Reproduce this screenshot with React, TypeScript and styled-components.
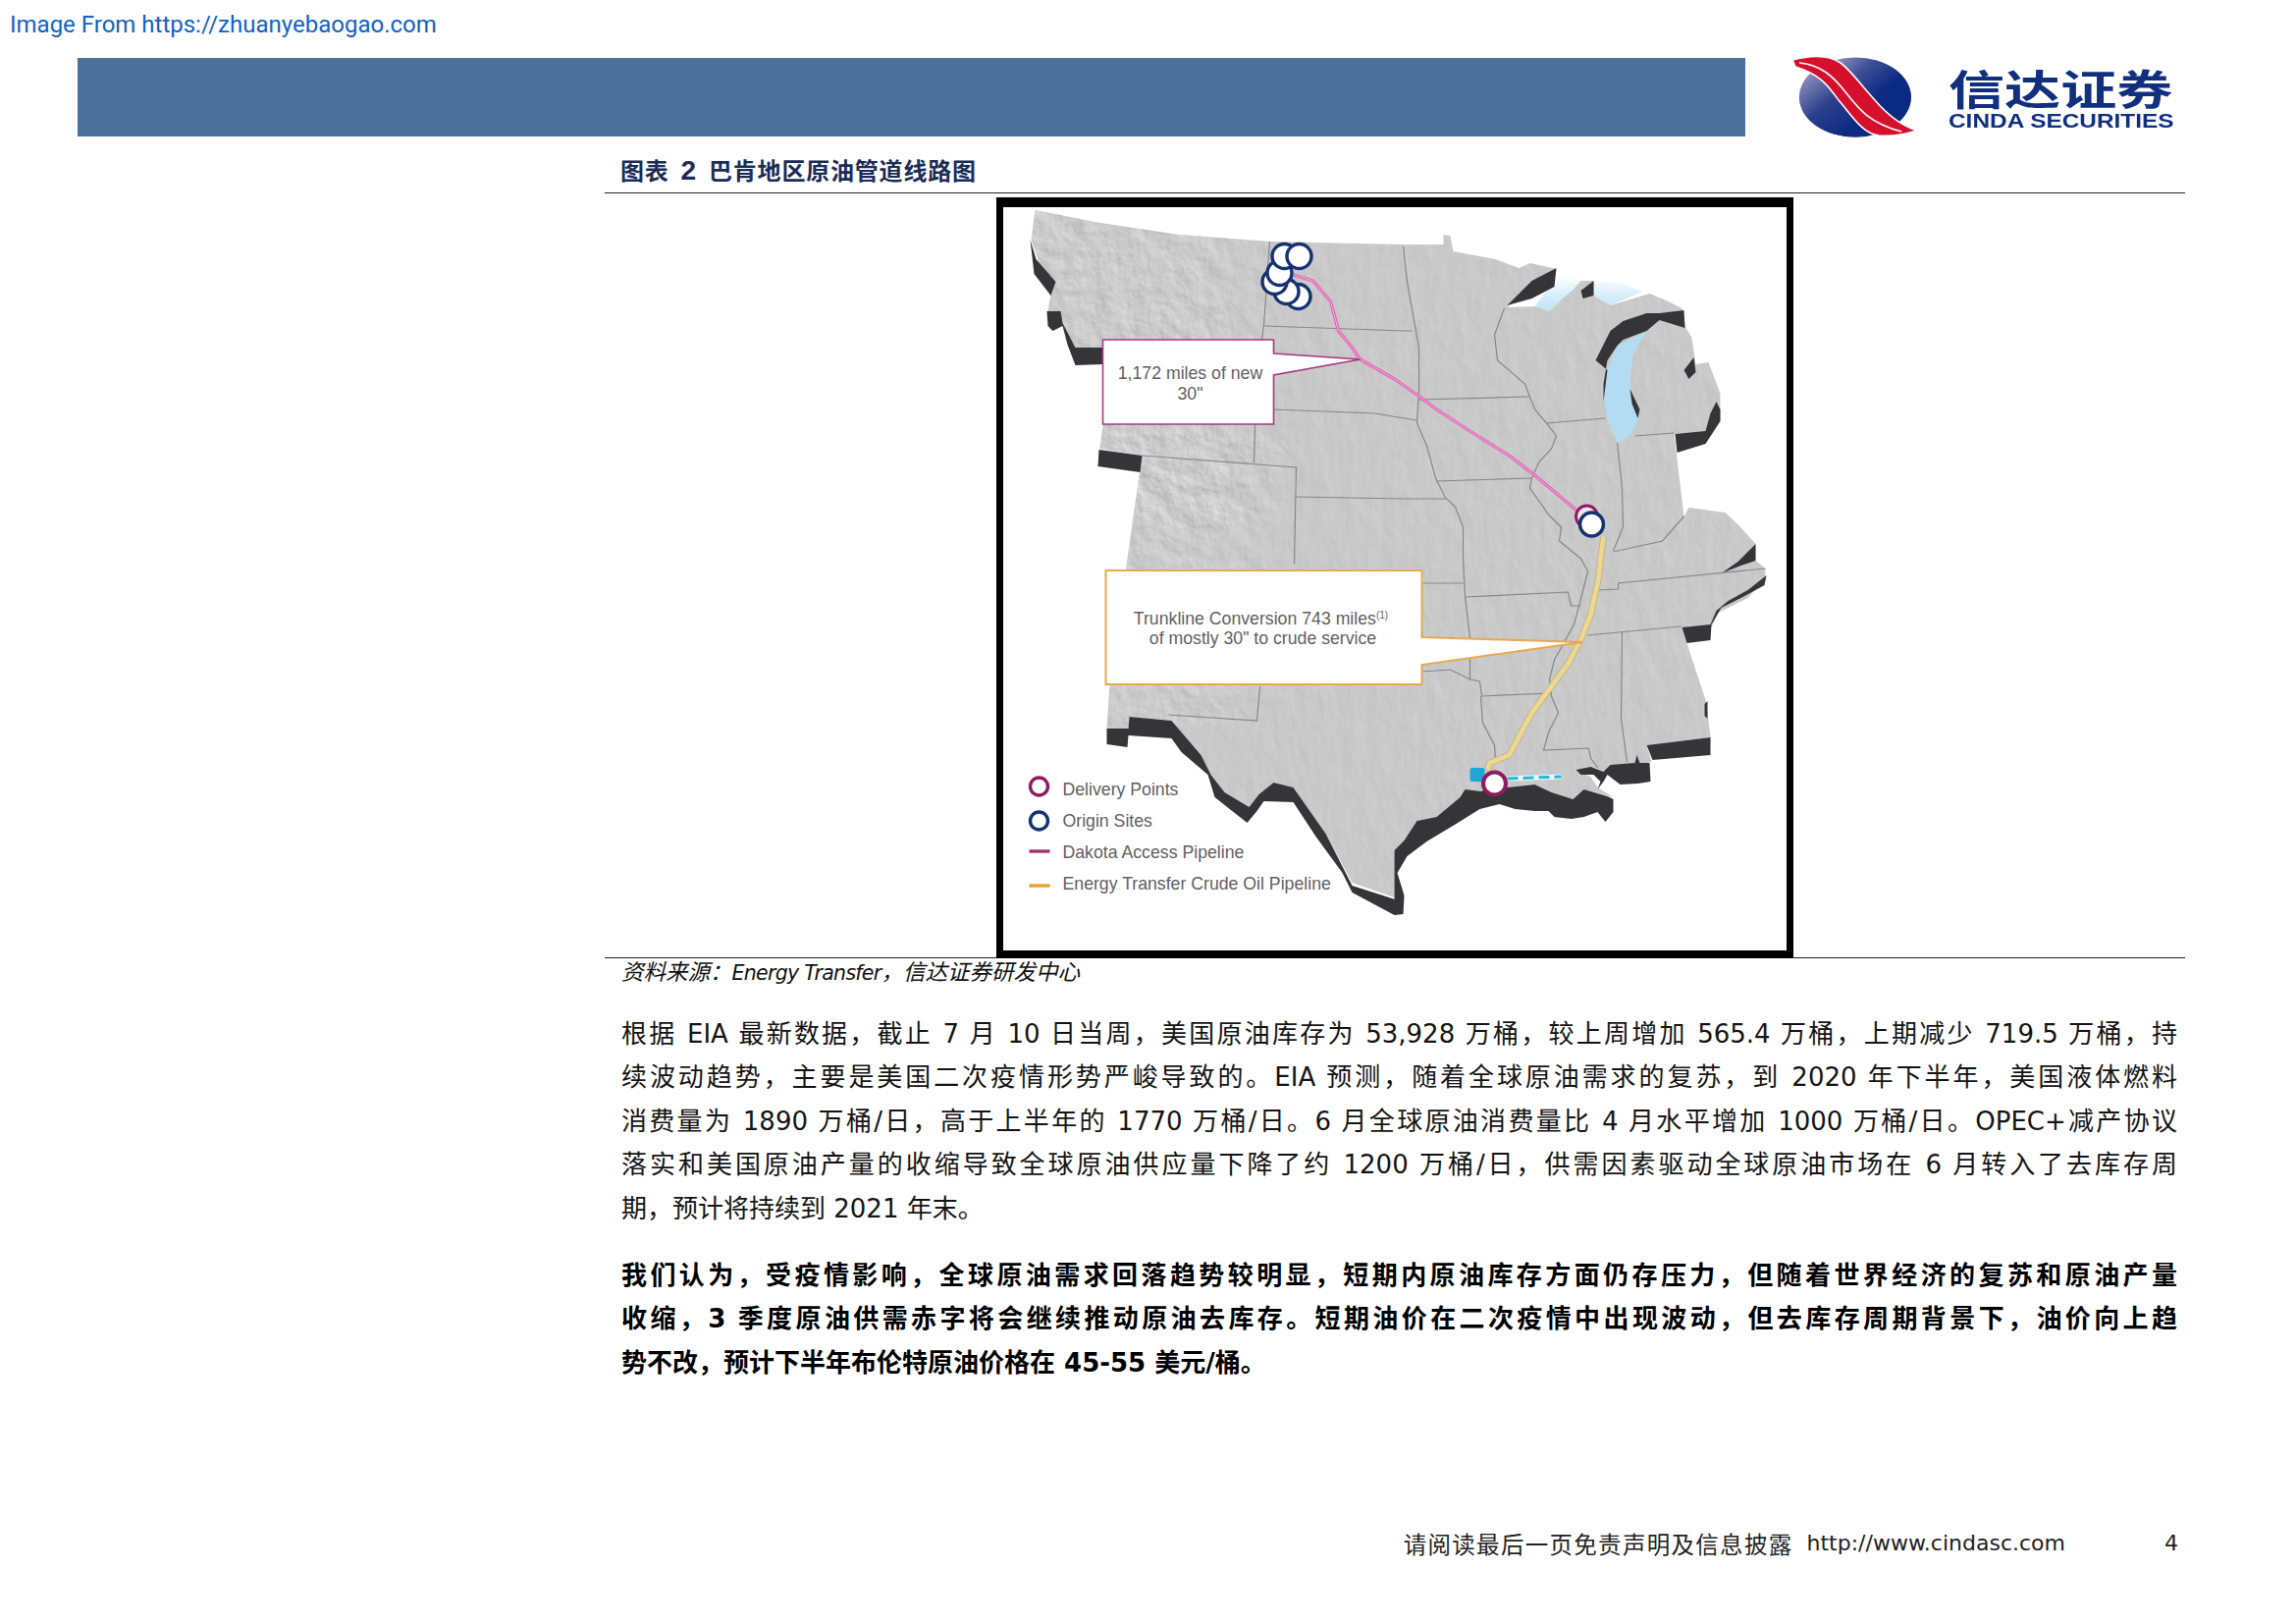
import React from "react";
import styled, { createGlobalStyle } from "styled-components";

const BODY_FONT = `"DejaVu Sans", "Noto Sans CJK SC", sans-serif`;
const CJK_FONT = `"Liberation Sans", "Noto Sans CJK SC", sans-serif`;

const GlobalStyle = createGlobalStyle`
    html, body {
        margin: 0;
        padding: 0;
        background: #ffffff;
    }
`;

const Page = styled.div`
    width: 2339px;
    height: 1654px;
    display: flex;
    flex-direction: column;
    overflow: hidden;
    background: #fff;
    color: #111;
`;

const SourceTag = styled.div`
    height: 59px;
    box-sizing: border-box;
    padding: 11px 0 0 10px;
    font: 400 24px/28px Roboto, sans-serif;
    color: #1262c4;
`;

const Header = styled.header`
    display: flex;
    align-items: flex-start;
    padding-left: 79px;
    height: 81px;
`;

const Banner = styled.div`
    width: 1699px;
    height: 80px;
    background: #4c7099;
`;

const Logo = styled.div`
    display: flex;
    align-items: flex-start;
    margin: -1px 0 0 47px;
`;

const LogoWords = styled.div`
    display: flex;
    flex-direction: column;
    margin: 10px 0 0 30px;
    color: #10307f;
`;

const LogoCn = styled.span`
    font: 700 42px/42px "Noto Sans CJK SC", sans-serif;
    transform: scale(1.36, 1);
    transform-origin: left center;
    white-space: nowrap;
`;

const LogoEn = styled.span`
    font: 700 20px/18px "Liberation Sans", sans-serif;
    transform: scale(1.22, 1);
    transform-origin: left center;
    white-space: nowrap;
    margin-top: 4px;
`;

const Content = styled.main`
    margin-left: 616px;
    width: 1610px;
    display: flex;
    flex-direction: column;
`;

const FigureTitle = styled.h3`
    margin: 0;
    height: 57px;
    box-sizing: border-box;
    padding: 18px 0 0 16px;
    border-bottom: 1.5px solid #222;
    font: 700 24px/30px "Noto Sans CJK SC", sans-serif;
    letter-spacing: 0.8px;
    color: #1b2c57;
`;

const TitleNumber = styled.span`
    font: 700 28px/30px "Liberation Sans", sans-serif;
    margin: 0 12px;
`;

const MapFrame = styled.div`
    align-self: center;
    width: 812px;
    height: 775px;
    box-sizing: border-box;
    margin-top: 4px;
    border-style: solid;
    border-color: #000;
    border-width: 10px 7px 8px;
    background: #fff;
    position: relative;
`;

const MapCanvas = styled.svg`
    display: block;
    width: 100%;
    height: 100%;
`;

const MapLabel = styled.text<{ $size?: number }>`
    font-family: "Liberation Sans", sans-serif;
    font-size: ${(p) => p.$size ?? 17.7}px;
    fill: #5f5f62;
`;

const SourceNote = styled.div`
    border-top: 1.5px solid #222;
    margin-top: -1px;
    height: 32px;
    box-sizing: border-box;
    padding: 1px 0 0 17px;
    font: italic 400 22.5px/28px ${CJK_FONT};
    color: #111;

    span {
        font: italic 400 20.5px/28px "DejaVu Sans", sans-serif;
        letter-spacing: -0.7px;
    }
`;

const Paragraph = styled.div<{ $gap: number; $bold?: boolean }>`
    margin-top: ${(p) => p.$gap}px;
    padding: 0 8px 0 17px;
    font: ${(p) => (p.$bold ? 700 : 400)} 26px/44.4px ${BODY_FONT};
    color: ${(p) => (p.$bold ? "#000" : "#141414")};
`;

const TextLine = styled.div<{ $last?: boolean }>`
    text-align: justify;
    text-align-last: ${(p) => (p.$last ? "left" : "justify")};
`;

const Footer = styled.footer`
    margin-top: auto;
    display: flex;
    align-items: center;
    justify-content: flex-end;
    padding: 0 120px 67px 0;
    color: #222;
`;

const FooterNote = styled.span`
    font: 400 23.5px/30px "Noto Sans CJK SC", sans-serif;
    letter-spacing: 1.3px;
`;

const FooterUrl = styled.span`
    font: 400 22px/30px "DejaVu Sans", sans-serif;
    margin-left: 14px;
`;

const PageNumber = styled.span`
    font: 400 22px/30px "DejaVu Sans", sans-serif;
    margin-left: 101px;
`;

const paragraphOne = [
    "根据 EIA 最新数据，截止 7 月 10 日当周，美国原油库存为 53,928 万桶，较上周增加 565.4 万桶，上期减少 719.5 万桶，持",
    "续波动趋势，主要是美国二次疫情形势严峻导致的。EIA 预测，随着全球原油需求的复苏，到 2020 年下半年，美国液体燃料",
    "消费量为 1890 万桶/日，高于上半年的 1770 万桶/日。6 月全球原油消费量比 4 月水平增加 1000 万桶/日。OPEC+减产协议",
    "落实和美国原油产量的收缩导致全球原油供应量下降了约 1200 万桶/日，供需因素驱动全球原油市场在 6 月转入了去库存周",
    "期，预计将持续到 2021 年末。",
];

const paragraphTwo = [
    "我们认为，受疫情影响，全球原油需求回落趋势较明显，短期内原油库存方面仍存压力，但随着世界经济的复苏和原油产量",
    "收缩，3 季度原油供需赤字将会继续推动原油去库存。短期油价在二次疫情中出现波动，但去库存周期背景下，油价向上趋",
    "势不改，预计下半年布伦特原油价格在 45-55 美元/桶。",
];

const LAND =
    "1054,215 1120,228 1200,240 1293,247 1430,250 1470,250 1470,240 1477,241 1480,257 1507,262 1523,265 1547,274 1558,269 1577,273 1585,275 1535,314 1563,313 1577,318 1603,295 1610,287 1623,287 1623,302 1640,312 1680,300 1697,307 1713,315 1717,335 1723,345 1727,372 1740,370 1752,402 1752,428 1737,442 1705,443 1707,460 1715,527 1720,518 1757,523 1770,535 1788,555 1788,572 1798,580 1798,590 1780,610 1750,625 1743,640 1713,640 1717,653 1738,717 1742,752 1677,760 1682,777 1633,787 1623,783 1607,787 1620,792 1627,803 1643,813 1613,805 1602,815 1580,808 1563,800 1535,803 1520,803 1508,807 1487,813 1463,833 1443,837 1430,857 1420,867 1420,915 1377,900 1350,850 1317,803 1297,798 1282,810 1272,823 1247,808 1233,790 1223,770 1193,735 1150,731 1149,743 1127,743 1130,700 1148,570 1163,465 1120,458 1123,435 1123,372 1095,355 1082,333 1067,317 1070,302 1050,245";

const SHADOWS = [
    "1049,245 1053,280 1070,302 1075,288 1055,265",
    "1066,318 1067,333 1072,338 1082,333 1087,352 1095,373 1123,372 1123,355 1095,355 1082,330 1080,318",
    "1119,459 1118,476 1161,482 1163,465",
    "1127,743 1127,759 1148,762 1149,750 1193,753 1203,767 1230,790 1237,813 1270,839 1280,827 1287,817 1317,818 1340,853 1367,890 1377,910 1420,933 1430,920 1377,903 1350,850 1317,803 1297,798 1282,810 1272,823 1247,808 1233,790 1223,770 1193,735 1150,731 1149,743",
    "1420,867 1430,857 1443,837 1463,833 1487,813 1492,805 1508,807 1520,803 1535,803 1563,800 1580,808 1602,815 1613,805 1637,812 1643,815 1643,828 1635,838 1627,828 1613,833 1600,835 1583,833 1577,827 1563,827 1543,825 1527,820 1507,825 1483,840 1453,858 1433,873 1423,890 1430,913 1429,932 1420,933",
    "1605,785 1620,782 1633,787 1640,780 1665,778 1667,770 1670,778 1680,778 1681,797 1668,799 1650,800 1637,790 1633,797 1627,805 1630,797 1623,790 1610,790",
    "1677,760 1742,752 1742,770 1683,775",
    "1736,718 1739,715 1739,733 1736,730",
    "1713,640 1718,656 1742,653 1743,637 1753,620 1773,610 1797,597 1799,587 1780,602 1760,613 1748,623 1742,637",
    "1753,585 1773,577 1788,572 1788,555 1770,573",
    "1535,312 1560,287 1585,274 1583,293 1560,305",
    "1610,297 1623,287 1623,302 1612,305",
    "1625,368 1640,338 1653,328 1677,320 1690,320 1715,317 1716,335 1690,327 1677,338 1653,347 1647,353 1637,368 1633,392 1633,410 1637,378",
    "1660,397 1670,418 1668,427 1662,412",
    "1715,378 1725,365 1727,380 1720,387",
    "1737,440 1742,422 1748,410 1752,418 1752,430 1737,453 1708,462 1706,443",
];

const STATE_LINES = [
    "1293,247 1287,333 1285,347 1278,435 1277,472",
    "1288,333 1430,338 1438,338",
    "1297,418 1400,422 1430,427 1443,429",
    "1163,465 1320,477 1318,575",
    "1320,507 1430,509 1472,509",
    "1429,252 1433,288 1445,355 1445,398 1443,432 1453,455 1462,488 1472,508 1482,517 1490,538 1490,570 1492,608 1497,650 1497,693",
    "1445,408 1558,405",
    "1532,315 1522,342 1525,368 1553,392 1563,418 1575,432 1585,445 1580,458 1567,472 1560,488 1558,498 1577,525 1590,538 1588,552 1610,570 1617,583 1612,603 1603,637 1583,673 1578,693 1580,710 1587,727 1577,747 1572,765 1618,763 1620,773 1627,783",
    "1575,432 1635,427",
    "1463,491 1560,488",
    "1647,452 1652,498 1653,538 1643,562",
    "1665,445 1705,442",
    "1715,527 1693,552 1643,563",
    "1627,602 1648,601 1648,595 1798,580",
    "1617,648 1712,639",
    "1652,645 1651,733 1657,777",
    "1492,609 1597,604 1600,618 1610,618",
    "1448,595 1490,595",
    "1448,685 1477,683 1497,693 1507,695 1509,710 1580,707",
    "1508,710 1510,737 1522,760 1523,777",
    "1283,700 1280,735 1190,729",
];

const DAKOTA_LINE =
    "M1317 281 L1337 287 L1355 308 L1363 338 L1377 355 L1385 367 L1420 387 L1443 403 L1463 418 L1500 442 L1537 465 L1563 485 L1607 522";
const TRANSFER_LINE =
    "M1633 548 L1630 570 L1628 590 L1620 627 L1610 652 L1597 677 L1580 700 L1560 727 L1537 770 L1517 778 L1515 785";

const ORIGIN_SITES: [number, number][] = [
    [1322, 303],
    [1310, 298],
    [1298, 288],
    [1303, 279],
    [1308, 262],
    [1323, 262],
];

function PipelineMap() {
    return (
        <MapCanvas viewBox="1021.5 212 798 757">
            <defs>
                <filter id="reliefFine" x="0" y="0" width="100%" height="100%" colorInterpolationFilters="sRGB">
                    <feTurbulence type="fractalNoise" baseFrequency="0.07 0.035" numOctaves="3" seed="4" />
                    <feDiffuseLighting surfaceScale="0.28" diffuseConstant="0.95" lightingColor="#ffffff">
                        <feDistantLight azimuth="135" elevation="56" />
                    </feDiffuseLighting>
                    <feGaussianBlur stdDeviation="0.7" />
                </filter>
                <filter id="reliefRough" x="0" y="0" width="100%" height="100%" colorInterpolationFilters="sRGB">
                    <feTurbulence type="fractalNoise" baseFrequency="0.05" numOctaves="5" seed="9" />
                    <feDiffuseLighting surfaceScale="1.3" diffuseConstant="0.97" lightingColor="#ffffff">
                        <feDistantLight azimuth="135" elevation="56" />
                    </feDiffuseLighting>
                    <feGaussianBlur stdDeviation="0.6" />
                </filter>
                <filter id="soft">
                    <feGaussianBlur stdDeviation="0.5" />
                </filter>
                <linearGradient id="westFade" x1="0" x2="1" y1="0" y2="0">
                    <stop offset="0" stopColor="#fff" />
                    <stop offset="0.6" stopColor="#fff" />
                    <stop offset="1" stopColor="#000" />
                </linearGradient>
                <mask id="westMask" maskUnits="userSpaceOnUse" x="1040" y="210" width="300" height="720">
                    <rect x="1040" y="210" width="300" height="720" fill="url(#westFade)" />
                </mask>
                <linearGradient id="superiorFade" x1="0" x2="0" y1="1" y2="0">
                    <stop offset="0" stopColor="#bfe3f6" />
                    <stop offset="0.45" stopColor="#d6eef9" />
                    <stop offset="1" stopColor="#ffffff" />
                </linearGradient>
                <clipPath id="landClip">
                    <polygon points={LAND} />
                </clipPath>
            </defs>

            <g filter="url(#soft)">
                <polygon points="1563,313 1587,282 1610,285 1653,290 1673,298 1640,312 1623,302 1603,295 1577,318" fill="url(#superiorFade)" />
                <g clipPath="url(#landClip)">
                    <rect x="1040" y="210" width="770" height="730" filter="url(#reliefFine)" />
                    <rect x="1040" y="210" width="300" height="330" filter="url(#reliefRough)" mask="url(#westMask)" opacity="0.6" />
                    <rect x="1120" y="440" width="210" height="300" filter="url(#reliefRough)" mask="url(#westMask)" opacity="0.5" />
                </g>
                <polygon
                    points="1647,353 1677,338 1663,362 1660,392 1670,425 1660,445 1647,452 1637,428 1633,405 1637,378"
                    fill="#b3dcf3"
                />
                {SHADOWS.map((points) => (
                    <polygon key={points} points={points} fill="#353637" />
                ))}
                {STATE_LINES.map((points) => (
                    <polyline key={points} points={points} fill="none" stroke="#87878a" strokeWidth="1.2" />
                ))}

                <path d={DAKOTA_LINE} fill="none" stroke="#e262b6" strokeWidth="3.2" strokeLinejoin="round" />
                <path d={DAKOTA_LINE} fill="none" stroke="#f4b2da" strokeWidth="1" strokeLinejoin="round" />
                <path d={TRANSFER_LINE} fill="none" stroke="#c6b27c" strokeWidth="6.5" strokeLinejoin="round" />
                <path d={TRANSFER_LINE} fill="none" stroke="#ecd793" strokeWidth="4.8" strokeLinejoin="round" />

                {ORIGIN_SITES.map(([cx, cy]) => (
                    <circle key={`${cx}-${cy}`} cx={cx} cy={cy} r="12.5" fill="#fff" stroke="#14306f" strokeWidth="3.4" />
                ))}
                <circle cx="1616" cy="527" r="11" fill="#efe6ef" stroke="#8e1a63" strokeWidth="3" />
                <circle cx="1621" cy="535" r="12" fill="#fff" stroke="#14306f" strokeWidth="3.4" />

                <rect x="1497" y="783" width="15" height="14" rx="2.5" fill="#1ba7d4" />
                <path d="M1535 794 L1590 792" stroke="#e9fbff" strokeWidth="5" />
                <path d="M1535 794 L1590 792" stroke="#27b6de" strokeWidth="3" strokeDasharray="11 5" />
                <circle cx="1522" cy="799" r="11.5" fill="#fff" stroke="#8e1a5f" strokeWidth="4" />

                <polygon
                    points="1297,347 1297,361 1385,367 1297,383 1297,433 1123,433 1123,347"
                    fill="#fff"
                    stroke="#a8377f"
                    strokeWidth="1.6"
                />
                <polygon
                    points="1126,582 1448,582 1448,650 1612,655 1448,678 1448,698 1126,698"
                    fill="#fff"
                    stroke="#e8a94f"
                    strokeWidth="2"
                />

                <circle cx="1058" cy="802" r="9" fill="none" stroke="#8e1a63" strokeWidth="3.4" />
                <circle cx="1058" cy="837" r="9" fill="none" stroke="#14306f" strokeWidth="3.4" />
                <path d="M1048 868 H1069" stroke="#a0306f" strokeWidth="3.4" />
                <path d="M1048 903 H1069" stroke="#e8a030" strokeWidth="3.4" />
            </g>

            <MapLabel x="1212" y="387" textAnchor="middle">1,172 miles of new</MapLabel>
            <MapLabel x="1212" y="408" textAnchor="middle">30"</MapLabel>
            <MapLabel x="1284" y="637" textAnchor="middle">
                Trunkline Conversion 743 miles
                <tspan dy="-6" fontSize="10">(1)</tspan>
            </MapLabel>
            <MapLabel x="1286" y="657" textAnchor="middle">of mostly 30" to crude service</MapLabel>
            <MapLabel x="1082" y="811">Delivery Points</MapLabel>
            <MapLabel x="1082" y="843">Origin Sites</MapLabel>
            <MapLabel x="1082" y="875">Dakota Access Pipeline</MapLabel>
            <MapLabel x="1082" y="907">Energy Transfer Crude Oil Pipeline</MapLabel>
        </MapCanvas>
    );
}

function CindaMark() {
    return (
        <svg width="130" height="84" viewBox="0 0 130 84">
            <defs>
                <linearGradient id="globeLower" x1="0.1" y1="0.1" x2="0.75" y2="0.8">
                    <stop offset="0" stopColor="#9c9cc4" />
                    <stop offset="0.55" stopColor="#2c3f8c" />
                    <stop offset="1" stopColor="#0c2a82" />
                </linearGradient>
                <linearGradient id="globeUpper" x1="0.1" y1="0" x2="0.85" y2="0.55">
                    <stop offset="0" stopColor="#c9c9de" />
                    <stop offset="0.5" stopColor="#3f4f98" />
                    <stop offset="0.8" stopColor="#0b2a82" />
                </linearGradient>
                <clipPath id="globeClip">
                    <ellipse cx="65" cy="41" rx="57" ry="40.5" />
                </clipPath>
            </defs>
            <g clipPath="url(#globeClip)">
                <rect width="130" height="84" fill="url(#globeUpper)" />
                <path d="M0 8 C30 18 38 30 48 44 C62 60 72 78 89 84 L0 84 Z" fill="url(#globeLower)" />
            </g>
            <path
                d="M1 3 C20 -2 38 -2 50 6 C62 15 70 28 85 44 C97 58 112 70 128 75 C115 79 100 81 89 80 C72 78 62 60 48 44 C38 30 30 18 4 10 Z"
                fill="#d6102c"
                stroke="#fff"
                strokeWidth="1.6"
            />
            <path d="M8 6 C30 8 42 20 52 32 C65 48 75 66 112 76" fill="none" stroke="#fff" strokeWidth="1.6" />
        </svg>
    );
}

function App() {
    return (
        <Page lang="zh-CN">
            <GlobalStyle />
            <SourceTag>Image From https://zhuanyebaogao.com</SourceTag>
            <Header>
                <Banner />
                <Logo>
                    <CindaMark />
                    <LogoWords>
                        <LogoCn>信达证券</LogoCn>
                        <LogoEn>CINDA SECURITIES</LogoEn>
                    </LogoWords>
                </Logo>
            </Header>
            <Content>
                <FigureTitle>图表<TitleNumber>2</TitleNumber>巴肯地区原油管道线路图</FigureTitle>
                <MapFrame>
                    <PipelineMap />
                </MapFrame>
                <SourceNote>
                    资料来源：<span>Energy Transfer</span>，信达证券研发中心
                </SourceNote>
                <Paragraph $gap={24}>
                    {paragraphOne.map((line, i) => (
                        <TextLine key={line} $last={i === paragraphOne.length - 1}>{line}</TextLine>
                    ))}
                </Paragraph>
                <Paragraph $gap={24} $bold>
                    {paragraphTwo.map((line, i) => (
                        <TextLine key={line} $last={i === paragraphTwo.length - 1}>{line}</TextLine>
                    ))}
                </Paragraph>
            </Content>
            <Footer>
                <FooterNote>请阅读最后一页免责声明及信息披露</FooterNote>
                <FooterUrl>http://www.cindasc.com</FooterUrl>
                <PageNumber>4</PageNumber>
            </Footer>
        </Page>
    );
}

export default App;
